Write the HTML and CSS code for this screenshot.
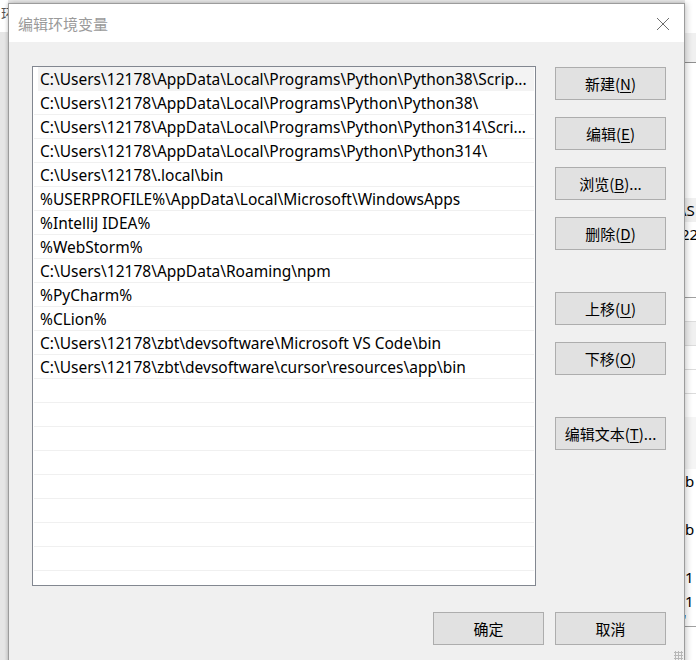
FILE: index.html
```html
<!DOCTYPE html>
<html lang="zh-CN">
<head>
<meta charset="utf-8">
<title>编辑环境变量</title>
<link rel="stylesheet" href="styles.css">
</head>
<body>
<div class="desktop">
  <div class="bg-left">
    <div class="bg-left-title">环</div>
  </div>
  <div class="bg-right">
    <div class="br-top"></div>
    <div class="br-band"></div>
    <div class="br-white"></div>
    <div class="br-row br-sel">\S</div>
    <div class="br-row">22</div>
    <div class="br-gap"></div>
    <div class="br-line-row"></div>
    <div class="br-line-row gray"></div>
    <div class="br-line-row"></div>
    <div class="br-line-row"></div>
    <div class="br-spacer"></div>
    <div class="br-text">:b</div>
    <div class="br-spacer2"></div>
    <div class="br-text">:b</div>
    <div class="br-spacer2"></div>
    <div class="br-text">.1</div>
    <div class="br-text">.1</div>
    <div class="br-tail">'</div>
  </div>

  <div class="dialog">
    <div class="titlebar">
      <span class="title">编辑环境变量</span>
      <svg class="close" width="14" height="14" viewBox="0 0 14 14"><path d="M1 1 L13 13 M13 1 L1 13" stroke="#6d6d6d" stroke-width="1" fill="none"/></svg>
    </div>
    <div class="content">
      <div class="main">
        <div class="list">
          <div class="row sel">C:\Users\12178\AppData\Local\Programs\Python\Python38\Scrip...</div>
          <div class="row">C:\Users\12178\AppData\Local\Programs\Python\Python38\</div>
          <div class="row">C:\Users\12178\AppData\Local\Programs\Python\Python314\Scri...</div>
          <div class="row">C:\Users\12178\AppData\Local\Programs\Python\Python314\</div>
          <div class="row">C:\Users\12178\.local\bin</div>
          <div class="row">%USERPROFILE%\AppData\Local\Microsoft\WindowsApps</div>
          <div class="row">%IntelliJ IDEA%</div>
          <div class="row">%WebStorm%</div>
          <div class="row">C:\Users\12178\AppData\Roaming\npm</div>
          <div class="row">%PyCharm%</div>
          <div class="row">%CLion%</div>
          <div class="row">C:\Users\12178\zbt\devsoftware\Microsoft VS Code\bin</div>
          <div class="row">C:\Users\12178\zbt\devsoftware\cursor\resources\app\bin</div>
          <div class="row"></div>
          <div class="row"></div>
          <div class="row"></div>
          <div class="row"></div>
          <div class="row"></div>
          <div class="row"></div>
          <div class="row"></div>
          <div class="row"></div>
          <div class="row"></div>
        </div>
        <div class="side">
          <button class="btn">新建(<u>N</u>)</button>
          <button class="btn">编辑(<u>E</u>)</button>
          <button class="btn">浏览(<u>B</u>)...</button>
          <button class="btn">删除(<u>D</u>)</button>
          <button class="btn gap-big">上移(<u>U</u>)</button>
          <button class="btn">下移(<u>O</u>)</button>
          <button class="btn gap-big">编辑文本(<u>T</u>)...</button>
        </div>
      </div>
      <div class="footer">
        <button class="btn">确定</button>
        <button class="btn">取消</button>
      </div>
    </div>
    <div class="grip"></div>
  </div>
</div>
</body>
</html>
```

FILE: styles.css
```css
* { box-sizing: border-box; }
html, body { margin: 0; padding: 0; }
body {
  width: 696px;
  height: 660px;
  overflow: hidden;
  font-family: "Noto Sans", "Noto Sans CJK SC", sans-serif;
  background: #e9e9e9;
}
.desktop {
  position: relative;
  width: 696px;
  height: 660px;
  overflow: hidden;
}

/* background windows peeking out */
.bg-left {
  position: absolute;
  left: 0; top: 0;
  width: 8px; height: 660px;
  background: #e6e6e6;
}
.bg-left-title {
  height: 32px;
  background: #ffffff;
  font: 14px "Noto Sans CJK SC", sans-serif;
  color: #555;
  line-height: 26px;
  padding-left: 1px;
  overflow: hidden;
}
.bg-right {
  position: absolute;
  left: 685px; top: 0;
  width: 20px; height: 660px;
  background: #ffffff;
  font: 15px "Noto Sans", sans-serif;
  color: #000;
  display: flex;
  flex-direction: column;
  overflow: hidden;
}
.br-top { height: 33px; background: #ffffff; flex: none; }
.br-band { height: 30px; background: #f0f0f0; border-bottom: 1px solid #8f8f8f; flex: none; }
.br-white { height: 135px; flex: none; }
.br-row { height: 24px; line-height: 24px; margin-left: -4px; flex: none; }
.br-sel { background: #f0f0f0; }
.br-gap { height: 52px; border-bottom: 1px solid #a0a0a0; flex: none; }
.br-line-row { height: 24px; border-bottom: 1px solid #dcdcdc; flex: none; }
.br-line-row.gray { background: #f0f0f0; }
.br-spacer { height: 75px; background: linear-gradient(#ffffff 0 23px, #f5f5f5 23px); flex: none; }
.br-spacer2 { height: 24px; flex: none; }
.br-text { height: 24px; line-height: 24px; margin-left: -4px; flex: none; }
.br-tail { height: 14px; line-height: 12px; margin-left: -2px; border-bottom: 1px solid #a0a0a0; flex: none; }

/* dialog */
.dialog {
  position: absolute;
  left: 8px; top: 3px;
  width: 677px; height: 680px;
  background: #f0f0f0;
  border: 1px solid #9c9c9c;
  box-shadow: 2px 0 6px rgba(0,0,0,0.18), -1px 0 3px rgba(0,0,0,0.12);
  display: flex;
  flex-direction: column;
}
.titlebar {
  height: 38px;
  background: #ffffff;
  display: flex;
  align-items: center;
  justify-content: space-between;
  padding: 0 14px 0 9px;
  flex: none;
}
.title {
  font: 15px "Noto Sans CJK SC", sans-serif;
  color: #9a9a9a;
  margin-top: 1px;
}
.close { display: block; margin-top: 1px; }

.content {
  padding: 24px 18px 0 23px;
  display: flex;
  flex-direction: column;
}
.main {
  display: flex;
  gap: 19px;
}
.list {
  width: 504px;
  height: 520px;
  background: #ffffff;
  border: 1px solid #828790;
  padding: 0 1px;
  overflow: hidden;
  display: flex;
  flex-direction: column;
}
.row {
  flex: none;
  height: 24px;
  line-height: 25px;
  border-bottom: 1px solid #f0f0f0;
  padding-left: 6px;
  font-size: 15.5px;
  color: #000;
  white-space: nowrap;
  overflow: hidden;
}
.row.sel {
  background: #f3f3f3;
  border-bottom-color: #f3f3f3;
  margin-left: 4px;
  padding-left: 2px;
}
.side {
  display: flex;
  flex-direction: column;
  gap: 17px;
  padding-top: 1px;
}
.btn {
  width: 111px;
  height: 33px;
  background: #e1e1e1;
  border: 1px solid #adadad;
  border-radius: 0;
  font: 15px "Noto Sans CJK SC", sans-serif;
  color: #000;
  padding: 0;
  margin: 0;
  display: flex;
  align-items: center;
  justify-content: center;
}
.btn u { text-underline-offset: 2px; }
.gap-big { margin-top: 25px; }
.footer {
  display: flex;
  justify-content: flex-end;
  gap: 11px;
  margin-top: 26px;
}
.grip {
  position: absolute;
  right: 1px; top: 647px;
  width: 9px; height: 9px;
  background-image: radial-gradient(circle, #b8b8b8 1px, transparent 1.2px);
  background-size: 3px 3px;
}
```
